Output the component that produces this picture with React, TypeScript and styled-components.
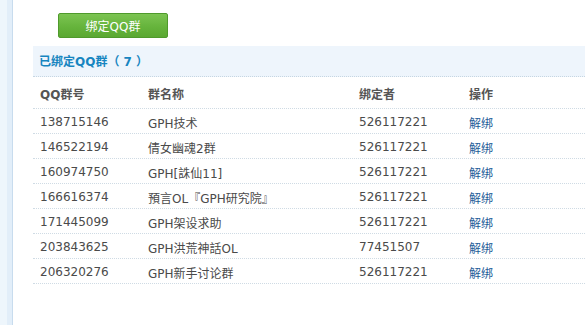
import styled, { createGlobalStyle } from "styled-components";

interface Group {
  id: string;
  name: string;
  owner: string;
}

const groups: Group[] = [
  { id: "138715146", name: "GPH技术", owner: "526117221" },
  { id: "146522194", name: "倩女幽魂2群", owner: "526117221" },
  { id: "160974750", name: "GPH[誅仙11]", owner: "526117221" },
  { id: "166616374", name: "預言OL『GPH研究院』", owner: "526117221" },
  { id: "171445099", name: "GPH架设求助", owner: "526117221" },
  { id: "203843625", name: "GPH洪荒神話OL", owner: "77451507" },
  { id: "206320276", name: "GPH新手讨论群", owner: "526117221" },
];

const App = () => {
  return (
    <>
      <GlobalStyle />
      <Page>
        <Sidebar />
        <Main>
          <Toolbar>
            <BindButton>绑定QQ群</BindButton>
          </Toolbar>
          <SectionTitle>已绑定QQ群（ 7 ）</SectionTitle>
          <Table>
            <HeadRow>
              <IdCell>QQ群号</IdCell>
              <NameCell>群名称</NameCell>
              <OwnerCell>绑定者</OwnerCell>
              <ActionCell>操作</ActionCell>
            </HeadRow>
            {groups.map((g) => (
              <Row key={g.id}>
                <IdCell>{g.id}</IdCell>
                <NameCell>{g.name}</NameCell>
                <OwnerCell>{g.owner}</OwnerCell>
                <ActionCell>
                  <Unbind href="#">解绑</Unbind>
                </ActionCell>
              </Row>
            ))}
          </Table>
        </Main>
      </Page>
    </>
  );
};

export default App;

const FONT = `"DejaVu Sans", "Noto Sans CJK SC", sans-serif`;

const GlobalStyle = createGlobalStyle`
  html, body {
    margin: 0;
    padding: 0;
    background: #fff;
  }
  body {
    font-family: ${FONT};
    font-size: 12px;
  }
`;

const Page = styled.div`
  display: flex;
  width: 585px;
  height: 325px;
  overflow: hidden;
`;

const Sidebar = styled.div`
  width: 12px;
  flex-shrink: 0;
  background: linear-gradient(to right, #eef6fc 0, #eef6fc 7px, #e2eef9 7px);
  border-right: 1px solid #c8dcee;
`;

const Main = styled.div`
  flex: 1;
  display: flex;
  flex-direction: column;
  padding-left: 20px;
`;

const Toolbar = styled.div`
  height: 46px;
  display: flex;
  align-items: flex-start;
  padding: 13px 0 0 25px;
  box-sizing: border-box;
`;

const BindButton = styled.button`
  width: 110px;
  height: 25px;
  border: 1px solid #4f9a2c;
  border-radius: 2px;
  background: linear-gradient(to bottom, #7cc452 0%, #66b43c 55%, #5aa832 100%);
  color: #fff;
  font-family: ${FONT};
  font-size: 12px;
  padding: 0;
  cursor: pointer;
`;

const SectionTitle = styled.div`
  height: 31px;
  line-height: 32px;
  padding-left: 6px;
  background: #eef5fc;
  border-bottom: 1px dotted #c6d6e2;
  box-sizing: border-box;
  color: #1785c0;
  font-weight: bold;
  font-size: 12px;
`;

const Table = styled.div`
  display: flex;
  flex-direction: column;
`;

const Row = styled.div`
  display: flex;
  align-items: center;
  height: 25px;
  border-bottom: 1px dotted #cfdbe4;
  box-sizing: border-box;
  color: #4a4a4a;
  font-size: 12px;
  padding-left: 7px;
  padding-top: 2px;
`;

const HeadRow = styled(Row)`
  height: 32px;
  font-weight: bold;
  color: #555;
  padding-top: 1px;
`;

const IdCell = styled.div`
  width: 108px;
`;

const NameCell = styled.div`
  width: 211px;
`;

const OwnerCell = styled.div`
  width: 110px;
`;

const ActionCell = styled.div`
  flex: 1;
`;

const Unbind = styled.a`
  color: #1e5d98;
  text-decoration: none;
`;
